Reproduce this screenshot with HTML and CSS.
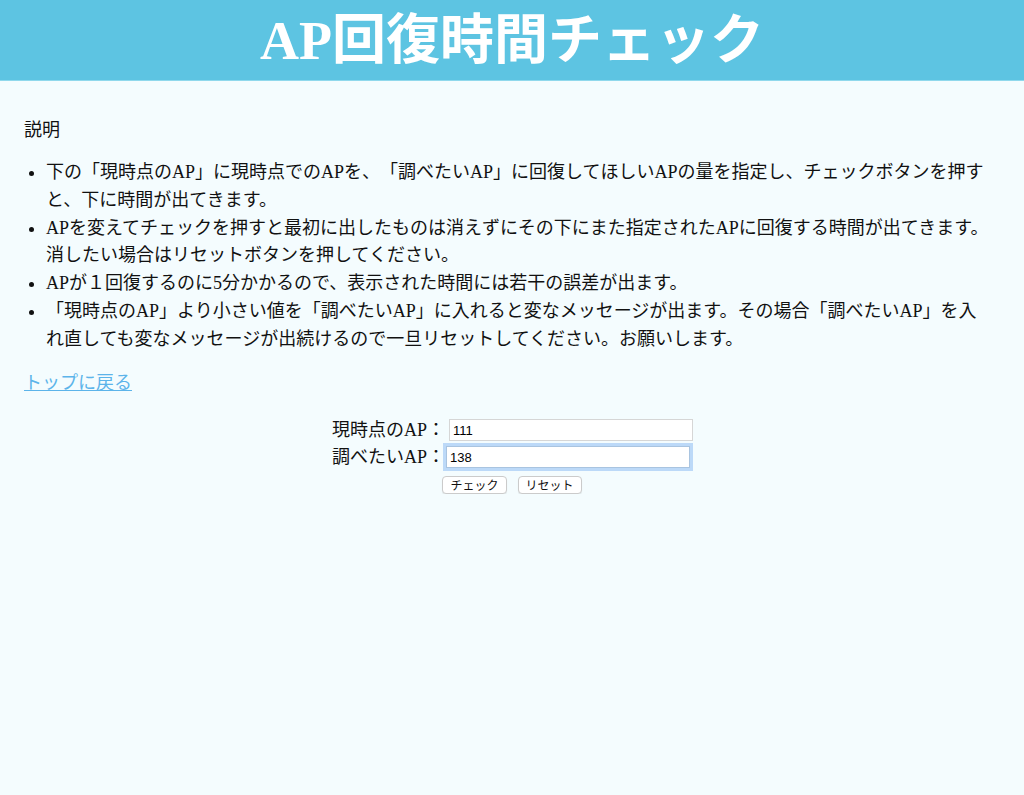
FILE: index.html
```html
<!DOCTYPE html>
<html lang="ja">
<head>
<meta charset="utf-8">
<title>AP回復時間チェック</title>
<link rel="stylesheet" href="styles.css">
</head>
<body>
<header class="site-header">
  <h1 class="site-title">AP回復時間チェック</h1>
</header>
<main class="content">
  <p class="section-title">説明</p>
  <ul class="notes">
    <li>下の「現時点のAP」に現時点でのAPを、「調べたいAP」に回復してほしいAPの量を指定し、チェックボタンを押すと、下に時間が出てきます。</li>
    <li>APを変えてチェックを押すと最初に出したものは消えずにその下にまた指定されたAPに回復する時間が出てきます。消したい場合はリセットボタンを押してください。</li>
    <li>APが１回復するのに5分かかるので、表示された時間には若干の誤差が出ます。</li>
    <li>「現時点のAP」より小さい値を「調べたいAP」に入れると変なメッセージが出ます。その場合「調べたいAP」を入れ直しても変なメッセージが出続けるので一旦リセットしてください。お願いします。</li>
  </ul>
  <p class="back"><a class="back-link" href="#">トップに戻る</a></p>
  <form class="ap-form">
    <div class="fields">
      <label class="field-label" for="now">現時点のAP：</label>
      <input class="field-input" id="now" type="text" value="111">
      <label class="field-label" for="target">調べたいAP：</label>
      <input class="field-input is-focused" id="target" type="text" value="138">
    </div>
    <div class="buttons">
      <button class="btn" type="button">チェック</button>
      <button class="btn" type="button">リセット</button>
    </div>
  </form>
</main>
</body>
</html>
```

FILE: styles.css
```css
html, body {
  margin: 0;
  padding: 0;
}
body {
  background: #f4fcfe;
  color: #111;
  font-family: "Liberation Serif", "Noto Sans CJK JP", serif;
  font-size: 18px;
  text-spacing-trim: space-all;
}
.site-header {
  background: #5dc4e2;
  height: 80px;
  border-bottom: 1px solid #8fd8ec;
  display: flex;
  align-items: center;
  justify-content: center;
}
.site-title {
  margin: 0;
  color: #fff;
  font-size: 54px;
  font-weight: bold;
  line-height: 80px;
  padding-top: 2px;
}
.content {
  padding: 35px 34px 0 24px;
}
.section-title {
  margin: 0;
  line-height: 28px;
}
.notes {
  margin: 15px 0 0;
  padding-left: 22px;
  line-height: 27.8px;
}
.back {
  margin: 15px 0 0;
  line-height: 28px;
}
.back-link {
  color: #5cb4ea;
  text-decoration: underline;
}
.ap-form {
  margin: 20px -10px 0 0;
  display: flex;
  flex-direction: column;
  align-items: center;
}
.fields {
  display: grid;
  grid-template-columns: auto 244px;
  grid-auto-rows: 27px;
  column-gap: 4px;
  align-items: center;
  margin-left: 1px;
}
.field-label {
  text-align: right;
  font-size: 18px;
  line-height: 27px;
  white-space: nowrap;
}
.field-input {
  box-sizing: border-box;
  width: 244px;
  height: 22px;
  margin: 0;
  padding: 0 3px;
  border: 1px solid #d6d6d6;
  background: #fff;
  font-family: "Liberation Sans", "Noto Sans CJK JP", sans-serif;
  font-size: 13px;
  color: #000;
  outline: none;
}
.field-input.is-focused {
  border-color: #a9c4e0;
  box-shadow: 0 0 0 3px #bcd9f8;
  margin-left: -3px;
}
.buttons {
  margin-top: 5px;
  display: flex;
  gap: 11px;
}
.btn {
  box-sizing: border-box;
  height: 18px;
  padding: 0 7px;
  border: 1px solid #cbcbcb;
  border-radius: 4px;
  background: #fff;
  box-shadow: 0 1px 1px rgba(0,0,0,0.08);
  font-family: "Noto Sans CJK JP", sans-serif;
  font-size: 12px;
  line-height: 16px;
  color: #111;
}
```
